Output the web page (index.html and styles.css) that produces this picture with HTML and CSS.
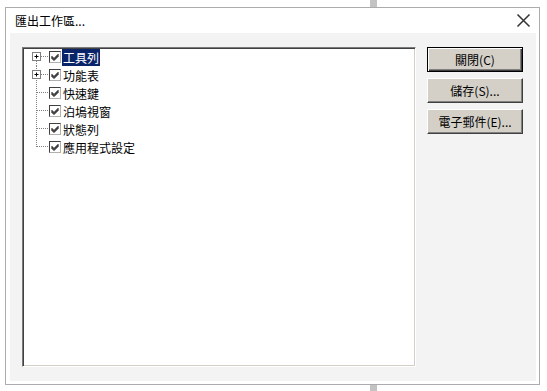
FILE: index.html
```html
<!DOCTYPE html>
<html lang="zh-Hant">
<head>
    <meta charset="UTF-8">
    <title>匯出工作區...</title>
    <link rel="stylesheet" href="styles.css">
</head>
<body>

    <!-- Dialog window -->
    <div class="window">
        <div class="title-bar">
            <span class="title">匯出工作區...</span>
            <svg class="close-icon" width="15" height="15" viewBox="0 0 15 15">
                <path d="M1.5 1.5 L13.5 13.5 M13.5 1.5 L1.5 13.5" stroke="#333" stroke-width="1.5" fill="none"/>
            </svg>
        </div>

        <div class="content">
            <!-- Tree of workspace parts -->
            <div class="tree">
                <div class="tree-row">
                    <svg class="tree-lines" width="24" height="18" viewBox="0 0 24 18">
                        <path d="M12.5 9 V18" stroke="#808080" stroke-dasharray="1 1" fill="none"/>
                        <path d="M17 8.5 H24" stroke="#808080" stroke-dasharray="1 1" fill="none"/>
                        <rect x="8.5" y="4.5" width="8" height="8" fill="#fff" stroke="#808080"/>
                        <path d="M10.5 8.5 H14.5 M12.5 6.5 V10.5" stroke="#000"/>
                    </svg>
                    <span class="check"></span>
                    <span class="label selected">工具列</span>
                </div>
                <div class="tree-row">
                    <svg class="tree-lines" width="24" height="18" viewBox="0 0 24 18">
                        <path d="M12.5 0 V18" stroke="#808080" stroke-dasharray="1 1" fill="none"/>
                        <path d="M17 8.5 H24" stroke="#808080" stroke-dasharray="1 1" fill="none"/>
                        <rect x="8.5" y="4.5" width="8" height="8" fill="#fff" stroke="#808080"/>
                        <path d="M10.5 8.5 H14.5 M12.5 6.5 V10.5" stroke="#000"/>
                    </svg>
                    <span class="check"></span>
                    <span class="label">功能表</span>
                </div>
                <div class="tree-row">
                    <svg class="tree-lines" width="24" height="18" viewBox="0 0 24 18">
                        <path d="M12.5 0 V18 M13 8.5 H24" stroke="#808080" stroke-dasharray="1 1" fill="none"/>
                    </svg>
                    <span class="check"></span>
                    <span class="label">快速鍵</span>
                </div>
                <div class="tree-row">
                    <svg class="tree-lines" width="24" height="18" viewBox="0 0 24 18">
                        <path d="M12.5 0 V18 M13 8.5 H24" stroke="#808080" stroke-dasharray="1 1" fill="none"/>
                    </svg>
                    <span class="check"></span>
                    <span class="label">泊塢視窗</span>
                </div>
                <div class="tree-row">
                    <svg class="tree-lines" width="24" height="18" viewBox="0 0 24 18">
                        <path d="M12.5 0 V18 M13 8.5 H24" stroke="#808080" stroke-dasharray="1 1" fill="none"/>
                    </svg>
                    <span class="check"></span>
                    <span class="label">狀態列</span>
                </div>
                <div class="tree-row">
                    <svg class="tree-lines" width="24" height="18" viewBox="0 0 24 18">
                        <path d="M12.5 0 V9 M13 8.5 H24" stroke="#808080" stroke-dasharray="1 1" fill="none"/>
                    </svg>
                    <span class="check"></span>
                    <span class="label">應用程式設定</span>
                </div>
            </div>

            <!-- Buttons -->
            <div class="buttons">
                <button class="btn default">關閉(C)</button>
                <button class="btn">儲存(S)...</button>
                <button class="btn">電子郵件(E)...</button>
            </div>
        </div>
    </div>

</body>
</html>
```

FILE: styles.css
```css
body {
    margin: 0;
    width: 547px;
    height: 391px;
    overflow: hidden;
    font-family: "Noto Sans CJK TC", "Liberation Sans", sans-serif;
    font-size: 12px;
    color: #000;
    background: linear-gradient(to right, #fff 370px, #c3c3c3 370px, #c3c3c3 377px, #fff 377px);
}

.window {
    margin: 7px 0 0 5px;
    width: 535px;
    height: 378px;
    box-sizing: border-box;
    border: 1px solid #acacac;
    background: #fff;
    padding: 0 3px 3px 4px;
    display: flex;
    flex-direction: column;
}

.title-bar {
    height: 25px;
    display: flex;
    align-items: center;
    justify-content: space-between;
    padding: 0 5px 0 5px;
}

.title {
    font-size: 12px;
}

.close-icon {
    display: block;
}

.content {
    flex: 1;
    background: #f3f3f3;
    display: flex;
    gap: 11px;
    padding: 14px 13px 0 12px;
}

.tree {
    width: 394px;
    height: 320px;
    box-sizing: border-box;
    background: #fff;
    border: 1px solid;
    border-color: #7a7a7a #fff #fff #7a7a7a;
    box-shadow: inset 1px 1px #404040, inset -1px -1px #d4d0c8;
    padding: 0 0 0 1px;
}

.tree-row {
    height: 18px;
    display: flex;
    align-items: center;
    overflow: hidden;
}

.tree-lines {
    display: block;
    flex: none;
}

.check {
    width: 12px;
    height: 12px;
    margin-left: 1px;
    flex: none;
    box-sizing: border-box;
    border: 1px solid;
    border-color: #404040 #b0b0b0 #b0b0b0 #404040;
    background: #fff url("data:image/svg+xml,%3Csvg xmlns='http://www.w3.org/2000/svg' width='10' height='10'%3E%3Cpath d='M1.5 4 L4 6.5 L8.5 2 M1.5 5 L4 7.5 L8.5 3 M1.5 6 L4 8.5 L8.5 4' stroke='%23000' fill='none'/%3E%3C/svg%3E") no-repeat center;
}

.label {
    margin-left: 1px;
    padding: 0 1px;
    line-height: 17px;
    white-space: nowrap;
}

.label.selected {
    background: #0a246a;
    color: #fff;
}

.buttons {
    width: 96px;
    display: flex;
    flex-direction: column;
    gap: 6px;
}

.btn {
    height: 25px;
    padding: 0;
    font-family: inherit;
    font-size: 12px;
    color: #000;
    background: #d4d0c8;
    border: 1px solid;
    border-color: #fff #404040 #404040 #fff;
    box-shadow: inset -1px -1px #808080;
}

.btn.default {
    border: 1px solid #000;
    box-shadow: inset 1px 1px #fff, inset -1px -1px #404040, inset -2px -2px #808080;
}
```
